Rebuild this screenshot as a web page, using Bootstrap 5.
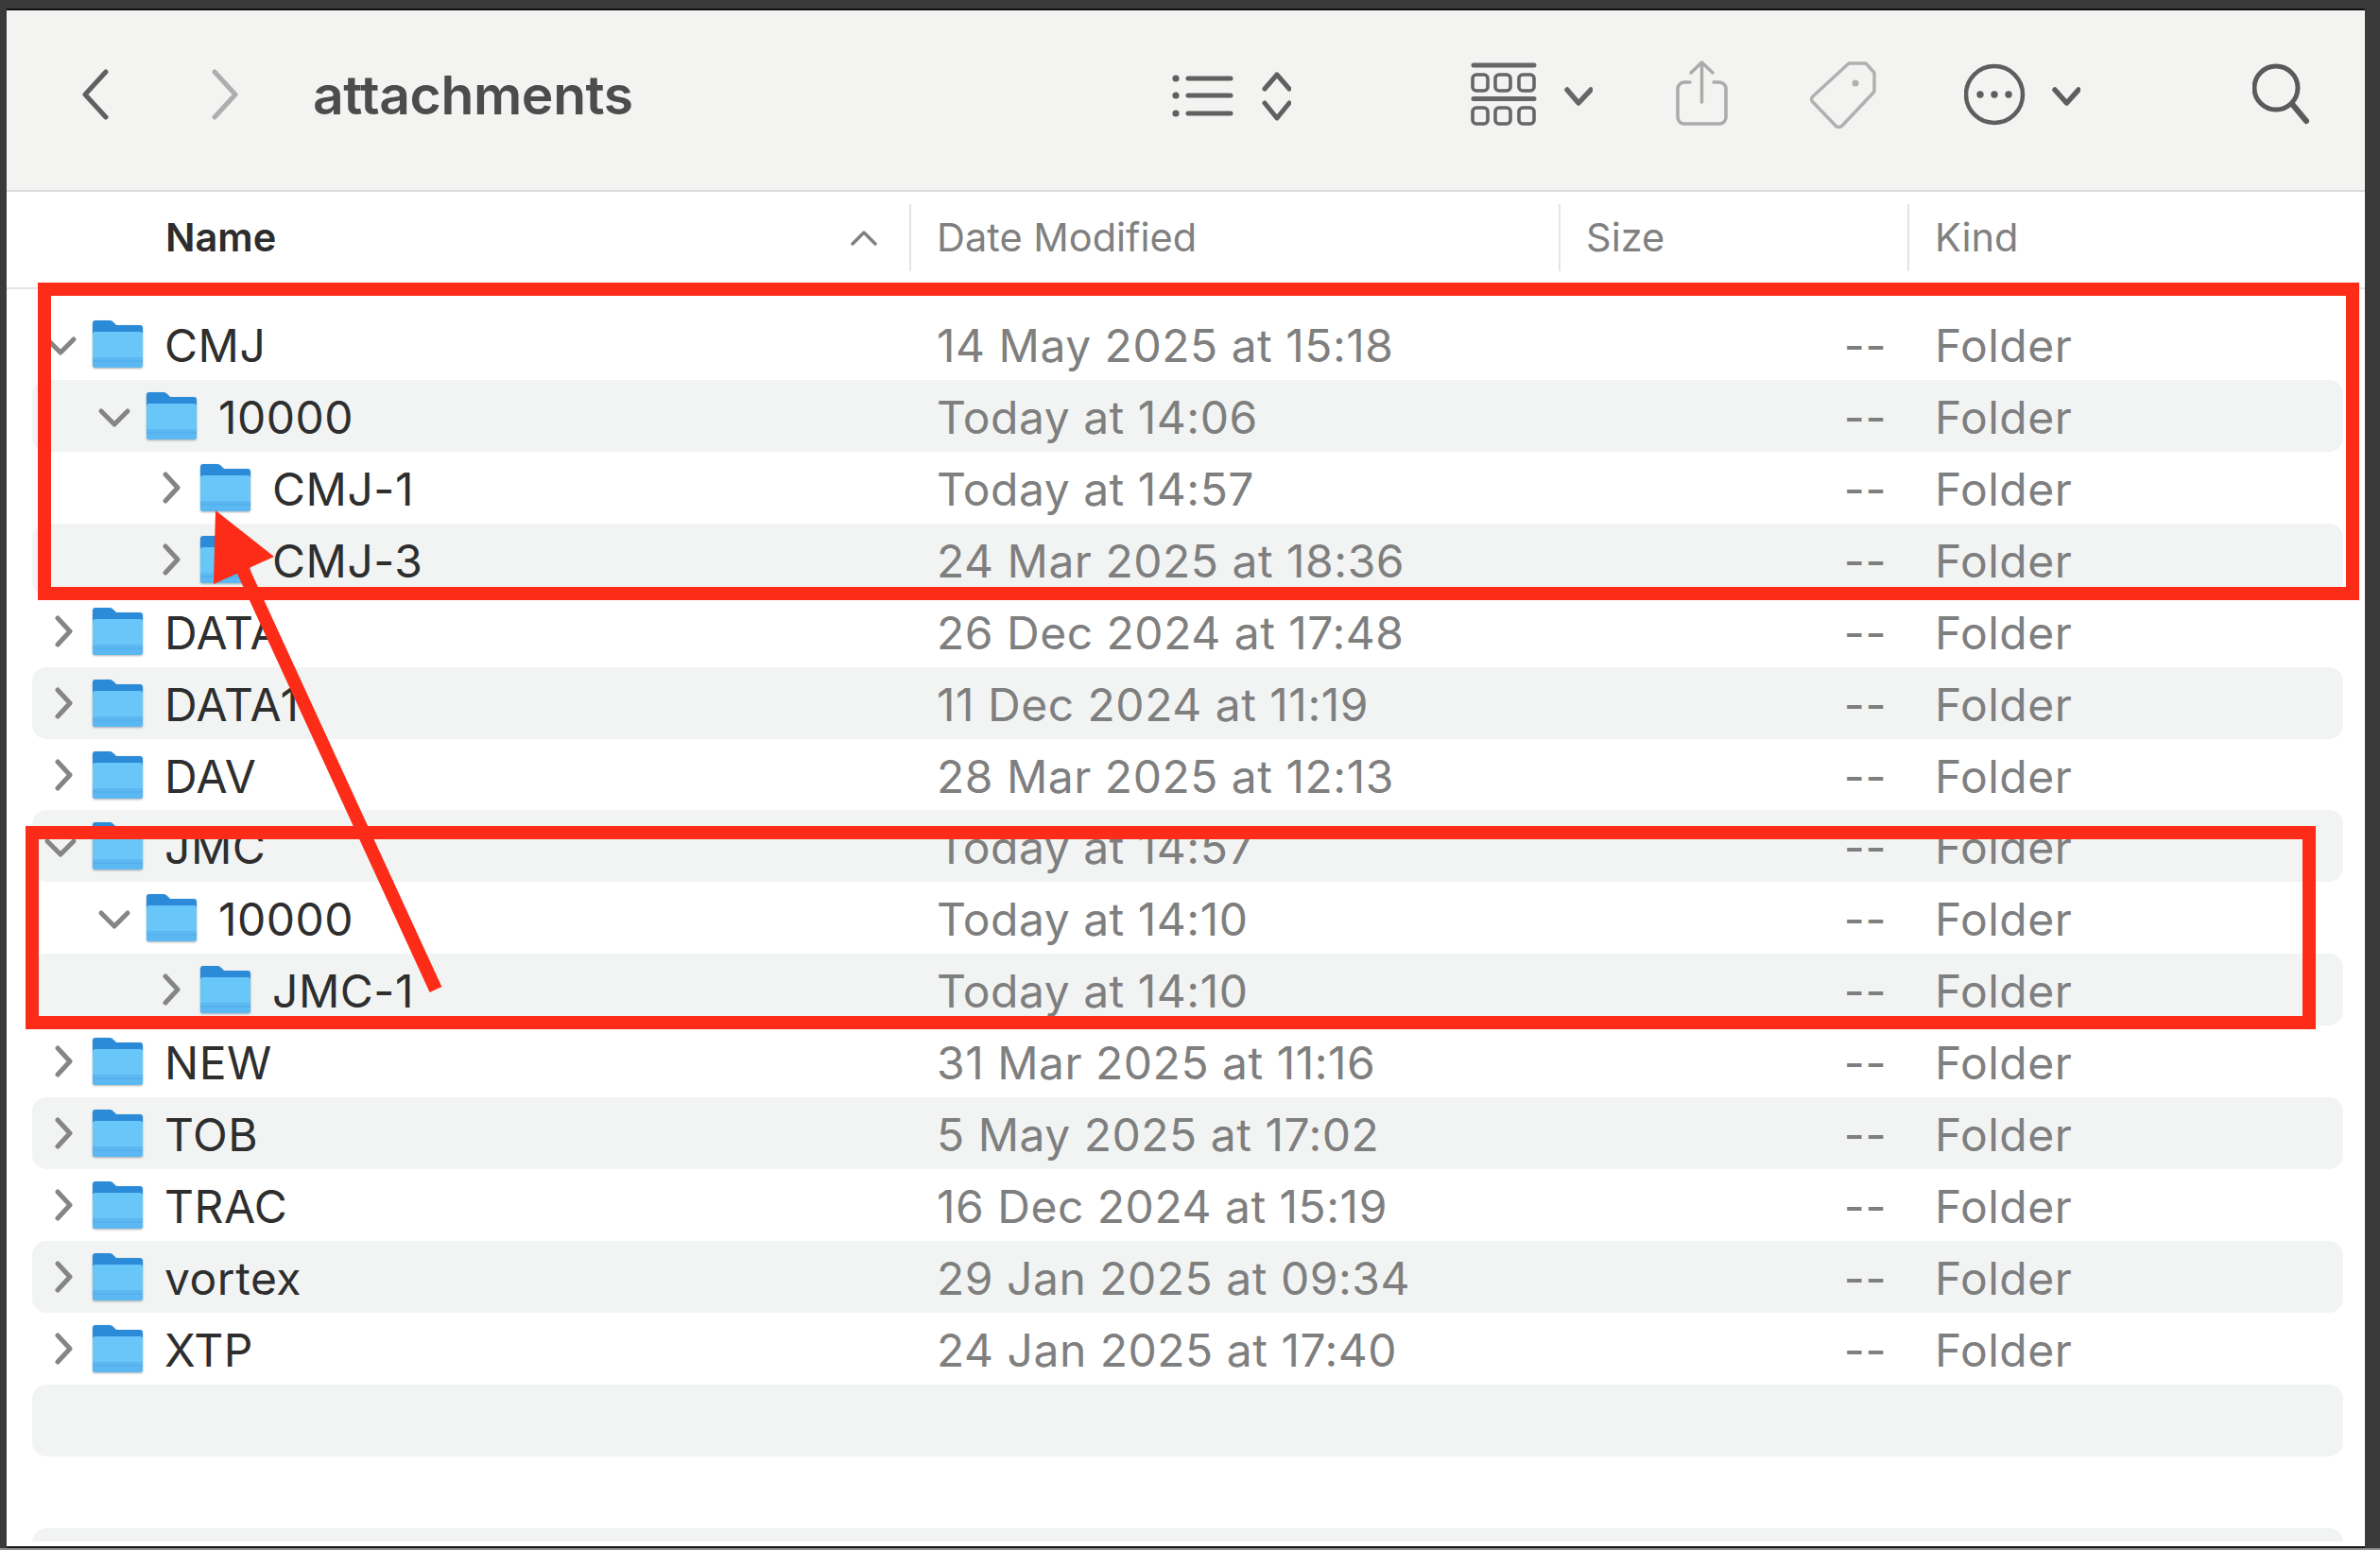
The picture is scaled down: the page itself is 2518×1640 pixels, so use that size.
<!doctype html>
<html lang="en">
<head>
<meta charset="utf-8">
<title>attachments</title>
<link href="https://cdn.jsdelivr.net/npm/bootstrap@5.3.0/dist/css/bootstrap.min.css" rel="stylesheet">
<style>
html,body{height:1640px;overflow:hidden;background:#3a3a3a;}
body{font-family:Inter,"Liberation Sans",sans-serif;}
.frame{height:1640px;padding:9px 16px 0 7px;}
.finder{height:1627px;border-top:2px solid #111;background:#fff;overflow:hidden;box-shadow:0 3px 0 #161616;}
.finder-inner{height:1620px;overflow:hidden;background:#fff;}
.bottom-strip{height:2px;background:#8f8f8f;left:0;right:0;bottom:0;}
.toolbar-bar{height:192px;background:#f3f3f2;border-bottom:2px solid #dcdcdc;padding:0 59px 12px 79px;}
.title-text{font-size:57px;font-weight:600;color:#4c4c4c;margin-left:78px;line-height:1;letter-spacing:-.4px;}
.m-fwd{margin-left:108px}.m-grid{margin-left:190px}.m-share{margin-left:88px}.m-tag{margin-left:87px}.m-more{margin-left:93px}.m-search{margin-left:182px}
.header-bar{height:103px;border-bottom:2px solid #e6e6e6;padding-top:13px;font-size:41.500px;color:#808080;margin-bottom:20px;}
.hcell{height:71px;}
.hname{width:955px;padding-left:168px;padding-right:34px;color:#2c2c2c;font-weight:600;}
.hdate{width:687px;padding-left:27px;border-left:2px solid #e4e4e4;}
.hsize{width:369px;padding-left:27px;border-left:2px solid #e4e4e4;}
.hkind{padding-left:27px;border-left:2px solid #e4e4e4;}
.file-row{height:75.930px;margin:0 23px 0 27px;border-radius:15px;font-size:48px;color:#7f7f7f;letter-spacing:.5px;}
.row-text{padding-top:4px;}
.row-alt{background:#f2f4f3;}
.c-name{width:957px;color:#2e2e2e;}
.c-date{width:657px;}
.c-size{width:399px;padding-right:51px;text-align:right;}
.lvl-1{padding-left:57px}.lvl-2{padding-left:114px}
.chev{width:60px;height:34px;flex:none;}
.fold{width:53px;height:50px;flex:none;margin:0 23px 0 4px;filter:drop-shadow(0 1px 1px rgba(0,0,0,.3));}
.overlay-art{left:0;top:0;pointer-events:none;}
</style>
</head>
<body class="position-relative m-0">
<svg width="0" height="0" class="position-absolute">
  <symbol id="folder" viewBox="0 0 53 50">
    <path d="M0 3a3 3 0 0 1 3-3h15c2 0 3 1 5 3l2 2h25a3 3 0 0 1 3 3v10H0z" fill="#2b8bd9"/>
    <rect y="12" width="53" height="38" rx="3" fill="#69c6f9"/>
    <path d="M0 39h53v8a3 3 0 0 1-3 3H3a3 3 0 0 1-3-3z" fill="#5bb8f2"/>
    <path d="M0 43h53" stroke="#4fabe9" stroke-width="1"/>
  </symbol>
  <symbol id="c-down" viewBox="0 0 60 34"><path d="M16 12 30 26 44 12" fill="none" stroke="#858585" stroke-width="5" stroke-linecap="round" stroke-linejoin="round"/></symbol>
  <symbol id="c-right" viewBox="0 0 60 34"><path d="M27 3 40 17 27 31" fill="none" stroke="#858585" stroke-width="5" stroke-linecap="round" stroke-linejoin="round"/></symbol>
</svg>

<div class="frame">
 <div class="finder">
  <div class="finder-inner">
   <div class="toolbar-bar d-flex align-items-center">
    <svg width="29" height="54" viewBox="0 0 29 54"><path d="M26 3 4 27l22 24" fill="none" stroke="#606060" stroke-width="5" stroke-linecap="round" stroke-linejoin="round"/></svg>
    <svg class="m-fwd" width="30" height="54" viewBox="0 0 30 54"><path d="M4 3l22 24L4 51" fill="none" stroke="#aeaeae" stroke-width="5" stroke-linecap="round" stroke-linejoin="round"/></svg>
    <div class="title-text">attachments</div>
    <svg class="ms-auto" width="126" height="76" viewBox="1240 62 126 76" fill="none" stroke="#606060" stroke-linecap="round" stroke-linejoin="round">
      <g fill="#606060" stroke="none"><circle cx="1244" cy="83" r="3.600"/><circle cx="1244" cy="101" r="3.600"/><circle cx="1244" cy="120" r="3.600"/></g>
      <path d="M1257 83h45M1257 101h45M1257 120h45" stroke-width="5"/>
      <path d="M1338 94l13-15 13 15M1338 109l13 16 13-16" stroke-width="5"/>
    </svg>
    <svg class="m-grid" width="129" height="76" viewBox="1556 62 129 76" fill="none" stroke="#666" stroke-linecap="round" stroke-linejoin="round">
      <path d="M1559 69h64M1559 104.500h64" stroke-width="5"/>
      <g stroke-width="3.600"><rect x="1558" y="79" width="16" height="17" rx="4"/><rect x="1582" y="79" width="16" height="17" rx="4"/><rect x="1607" y="79" width="16" height="17" rx="4"/><rect x="1558" y="114" width="16" height="17" rx="4"/><rect x="1582" y="114" width="16" height="17" rx="4"/><rect x="1607" y="114" width="16" height="17" rx="4"/></g>
      <path d="M1658 95l12 14 13-14" stroke-width="5.500"/>
    </svg>
    <svg class="m-share" width="55" height="76" viewBox="1773 62 55 76" fill="none" stroke="#ababab" stroke-width="3.500" stroke-linecap="round" stroke-linejoin="round">
      <path d="M1788 87h-6a7 7 0 0 0-7 7v30a7 7 0 0 0 7 7h37a7 7 0 0 0 7-7V94a7 7 0 0 0-7-7h-6"/>
      <path d="M1800.500 108V66M1789 77l11.500-11 11.500 11"/>
    </svg>
    <svg class="m-tag" width="70" height="76" viewBox="1915 62 70 76" fill="none" stroke="#b0b0b0" stroke-width="3.500" stroke-linejoin="round">
      <path d="M1956 67h18l9 10v19a4 4 0 0 1-1 2l-33 35a5 5 0 0 1-7 0l-24-25a4 4 0 0 1 0-6z"/>
      <circle cx="1963" cy="88" r="3.500" fill="#b0b0b0" stroke="none"/>
    </svg>
    <svg class="m-more" width="123" height="76" viewBox="2078 62 123 76" fill="none" stroke="#5e5e5e" stroke-linecap="round" stroke-linejoin="round">
      <circle cx="2110" cy="100" r="30" stroke-width="4.500"/>
      <g fill="#5e5e5e" stroke="none"><circle cx="2095" cy="100" r="3.700"/><circle cx="2110" cy="100" r="3.700"/><circle cx="2125" cy="100" r="3.700"/></g>
      <path d="M2174 95l12.500 14 12.500-14" stroke-width="5.500"/>
    </svg>
    <svg class="m-search" width="60" height="76" viewBox="2383 62 60 76" fill="none" stroke="#5a5a5a" stroke-linecap="round">
      <circle cx="2408" cy="93" r="23" stroke-width="5"/>
      <path d="M2425 110l15 18" stroke-width="6"/>
    </svg>
   </div>

   <div class="header-bar d-flex">
    <div class="hcell hname d-flex align-items-center justify-content-between"><span>Name</span>
      <svg width="28" height="18" viewBox="0 0 28 18"><path d="M2 15 14 3l12 12" fill="none" stroke="#808080" stroke-width="3.500" stroke-linecap="round" stroke-linejoin="round"/></svg>
    </div>
    <div class="hcell hdate d-flex align-items-center">Date Modified</div>
    <div class="hcell hsize d-flex align-items-center">Size</div>
    <div class="hcell hkind d-flex align-items-center flex-grow-1">Kind</div>
   </div>

   <div class="file-list">
    <div class="file-row d-flex align-items-center"><div class="c-name d-flex align-items-center"><svg class="chev"><use href="#c-down"/></svg><svg class="fold"><use href="#folder"/></svg><span class="row-text">CMJ</span></div><div class="c-date row-text">14 May 2025 at 15:18</div><div class="c-size row-text">--</div><div class="row-text">Folder</div></div>
    <div class="file-row row-alt d-flex align-items-center"><div class="c-name lvl-1 d-flex align-items-center"><svg class="chev"><use href="#c-down"/></svg><svg class="fold"><use href="#folder"/></svg><span class="row-text">10000</span></div><div class="c-date row-text">Today at 14:06</div><div class="c-size row-text">--</div><div class="row-text">Folder</div></div>
    <div class="file-row d-flex align-items-center"><div class="c-name lvl-2 d-flex align-items-center"><svg class="chev"><use href="#c-right"/></svg><svg class="fold"><use href="#folder"/></svg><span class="row-text">CMJ-1</span></div><div class="c-date row-text">Today at 14:57</div><div class="c-size row-text">--</div><div class="row-text">Folder</div></div>
    <div class="file-row row-alt d-flex align-items-center"><div class="c-name lvl-2 d-flex align-items-center"><svg class="chev"><use href="#c-right"/></svg><svg class="fold"><use href="#folder"/></svg><span class="row-text">CMJ-3</span></div><div class="c-date row-text">24 Mar 2025 at 18:36</div><div class="c-size row-text">--</div><div class="row-text">Folder</div></div>
    <div class="file-row d-flex align-items-center"><div class="c-name d-flex align-items-center"><svg class="chev"><use href="#c-right"/></svg><svg class="fold"><use href="#folder"/></svg><span class="row-text">DATA</span></div><div class="c-date row-text">26 Dec 2024 at 17:48</div><div class="c-size row-text">--</div><div class="row-text">Folder</div></div>
    <div class="file-row row-alt d-flex align-items-center"><div class="c-name d-flex align-items-center"><svg class="chev"><use href="#c-right"/></svg><svg class="fold"><use href="#folder"/></svg><span class="row-text">DATA1</span></div><div class="c-date row-text">11 Dec 2024 at 11:19</div><div class="c-size row-text">--</div><div class="row-text">Folder</div></div>
    <div class="file-row d-flex align-items-center"><div class="c-name d-flex align-items-center"><svg class="chev"><use href="#c-right"/></svg><svg class="fold"><use href="#folder"/></svg><span class="row-text">DAV</span></div><div class="c-date row-text">28 Mar 2025 at 12:13</div><div class="c-size row-text">--</div><div class="row-text">Folder</div></div>
    <div class="file-row row-alt d-flex align-items-center"><div class="c-name d-flex align-items-center"><svg class="chev"><use href="#c-down"/></svg><svg class="fold"><use href="#folder"/></svg><span class="row-text">JMC</span></div><div class="c-date row-text">Today at 14:57</div><div class="c-size row-text">--</div><div class="row-text">Folder</div></div>
    <div class="file-row d-flex align-items-center"><div class="c-name lvl-1 d-flex align-items-center"><svg class="chev"><use href="#c-down"/></svg><svg class="fold"><use href="#folder"/></svg><span class="row-text">10000</span></div><div class="c-date row-text">Today at 14:10</div><div class="c-size row-text">--</div><div class="row-text">Folder</div></div>
    <div class="file-row row-alt d-flex align-items-center"><div class="c-name lvl-2 d-flex align-items-center"><svg class="chev"><use href="#c-right"/></svg><svg class="fold"><use href="#folder"/></svg><span class="row-text">JMC-1</span></div><div class="c-date row-text">Today at 14:10</div><div class="c-size row-text">--</div><div class="row-text">Folder</div></div>
    <div class="file-row d-flex align-items-center"><div class="c-name d-flex align-items-center"><svg class="chev"><use href="#c-right"/></svg><svg class="fold"><use href="#folder"/></svg><span class="row-text">NEW</span></div><div class="c-date row-text">31 Mar 2025 at 11:16</div><div class="c-size row-text">--</div><div class="row-text">Folder</div></div>
    <div class="file-row row-alt d-flex align-items-center"><div class="c-name d-flex align-items-center"><svg class="chev"><use href="#c-right"/></svg><svg class="fold"><use href="#folder"/></svg><span class="row-text">TOB</span></div><div class="c-date row-text">5 May 2025 at 17:02</div><div class="c-size row-text">--</div><div class="row-text">Folder</div></div>
    <div class="file-row d-flex align-items-center"><div class="c-name d-flex align-items-center"><svg class="chev"><use href="#c-right"/></svg><svg class="fold"><use href="#folder"/></svg><span class="row-text">TRAC</span></div><div class="c-date row-text">16 Dec 2024 at 15:19</div><div class="c-size row-text">--</div><div class="row-text">Folder</div></div>
    <div class="file-row row-alt d-flex align-items-center"><div class="c-name d-flex align-items-center"><svg class="chev"><use href="#c-right"/></svg><svg class="fold"><use href="#folder"/></svg><span class="row-text">vortex</span></div><div class="c-date row-text">29 Jan 2025 at 09:34</div><div class="c-size row-text">--</div><div class="row-text">Folder</div></div>
    <div class="file-row d-flex align-items-center"><div class="c-name d-flex align-items-center"><svg class="chev"><use href="#c-right"/></svg><svg class="fold"><use href="#folder"/></svg><span class="row-text">XTP</span></div><div class="c-date row-text">24 Jan 2025 at 17:40</div><div class="c-size row-text">--</div><div class="row-text">Folder</div></div>
    <div class="file-row row-alt"></div>
    <div class="file-row"></div>
    <div class="file-row row-alt"></div>
   </div>
  </div>
 </div>
</div>
<div class="bottom-strip position-absolute"></div>

<svg class="overlay-art position-absolute" width="2518" height="1640" viewBox="0 0 2518 1640" fill="none">
  <rect x="47" y="306" width="2442" height="322" stroke="#fc2c19" stroke-width="14"/>
  <rect x="34" y="881" width="2409" height="201" stroke="#fc2c19" stroke-width="14"/>
  <path d="M461 1047 250 588" stroke="#fc2c19" stroke-width="14"/>
  <path d="M228 540 290 589 226 618z" fill="#fc2c19"/>
</svg>
</body>
</html>
